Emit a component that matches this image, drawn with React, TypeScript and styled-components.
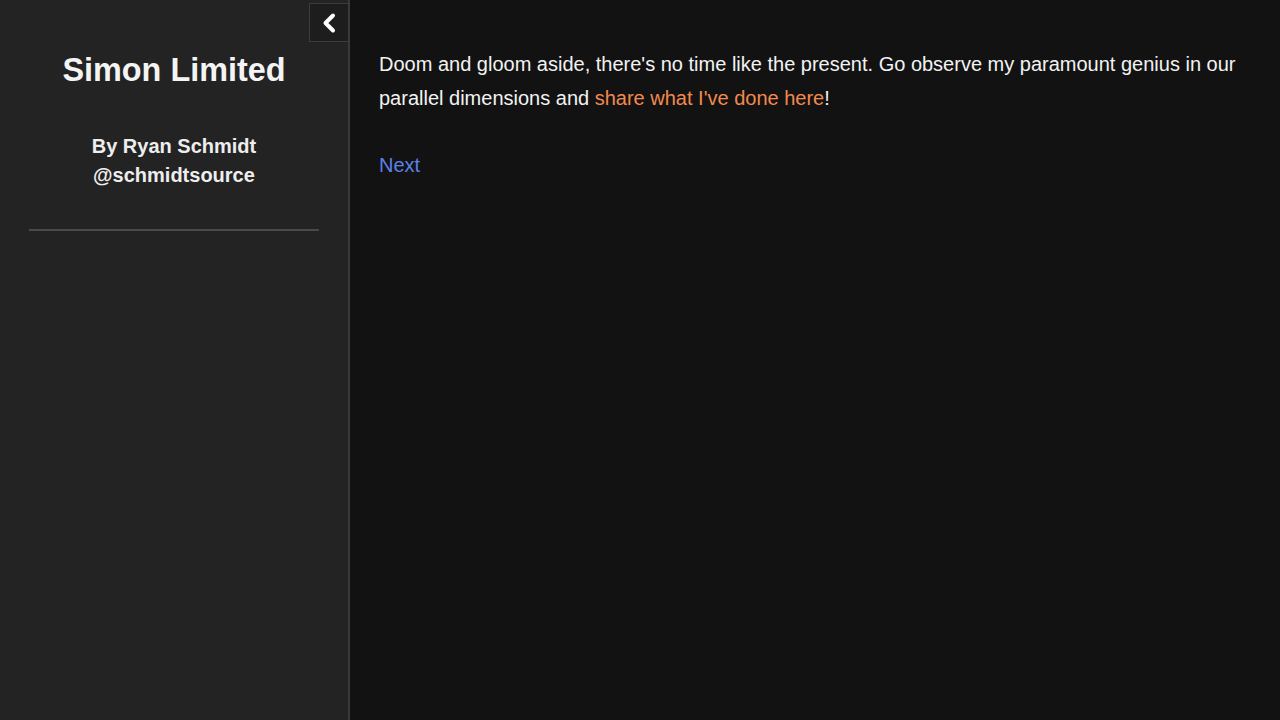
import React from "react";
import styled, { createGlobalStyle } from "styled-components";

const Global = createGlobalStyle`
  html, body, #root { margin: 0; padding: 0; height: 100%; }
  body { background: #121212; font-family: "Liberation Sans", Arial, sans-serif; }
`;

const Layout = styled.div`
  display: flex;
  height: 720px;
  width: 1280px;
  overflow: hidden;
`;

const Sidebar = styled.aside`
  position: relative;
  width: 348px;
  flex-shrink: 0;
  background: #232323;
  border-right: 2px solid #393939;
  display: flex;
  flex-direction: column;
  align-items: center;
  padding-top: 50px;
  box-sizing: content-box;
`;

const Title = styled.h1`
  margin: 0;
  font-size: 32.4px;
  font-weight: bold;
  color: #f4f4f4;
  line-height: 40px;
  text-align: center;
`;

const Byline = styled.div`
  margin-top: 42px;
  font-size: 20px;
  font-weight: bold;
  color: #eeeeee;
  line-height: 29px;
  text-align: center;
`;

const Divider = styled.hr`
  width: 290px;
  margin: 39px 0 0;
  border: none;
  height: 2px;
  background: #4a4a4a;
`;

const Toggle = styled.button`
  position: absolute;
  top: 3px;
  right: -1px;
  width: 40px;
  height: 39px;
  background: #1d1d1d;
  border: 1px solid #3c3c3c;
  padding: 0;
  display: flex;
  align-items: center;
  justify-content: center;
  cursor: pointer;
`;

const Main = styled.main`
  flex: 1;
  background: #121212;
  padding: 47px 30px 0 29px;
`;

const Paragraph = styled.p`
  margin: 0;
  font-size: 20px;
  line-height: 34px;
  color: #f2f2f2;
`;

const Link = styled.a<{ $tone: "orange" | "blue" }>`
  color: ${(p) => (p.$tone === "orange" ? "#f28a4e" : "#5b82e8")};
  text-decoration: none;
`;

const NextRow = styled.div`
  margin-top: 33px;
  font-size: 20px;
  line-height: 34px;
`;

export default function App() {
  return (
    <>
      <Global />
      <Layout>
        <Sidebar>
          <Toggle aria-label="Collapse sidebar">
            <svg width="16" height="22" viewBox="0 0 16 22">
              <path
                d="M12 3.5 L4.5 11 L12 18.5"
                fill="none"
                stroke="#ffffff"
                strokeWidth="4"
                strokeLinecap="round"
                strokeLinejoin="round"
              />
            </svg>
          </Toggle>
          <Title>Simon Limited</Title>
          <Byline>
            By Ryan Schmidt
            <br />
            @schmidtsource
          </Byline>
          <Divider />
        </Sidebar>
        <Main>
          <Paragraph>
            Doom and gloom aside, there's no time like the present. Go observe my paramount genius in our
            parallel dimensions and <Link $tone="orange" href="#">share what I've done here</Link>!
          </Paragraph>
          <NextRow>
            <Link $tone="blue" href="#">Next</Link>
          </NextRow>
        </Main>
      </Layout>
    </>
  );
}
